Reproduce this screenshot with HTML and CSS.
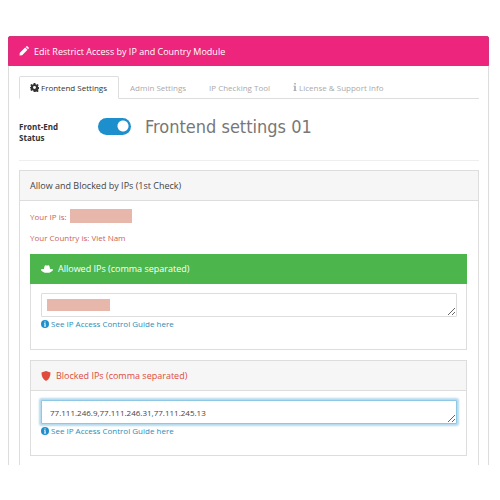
FILE: index.html
```html
<!DOCTYPE html>
<html lang="en">
<head>
<meta charset="UTF-8">
<meta name="viewport" content="width=device-width, initial-scale=1.0">
<title>Edit Restrict Access by IP and Country Module</title>
<link rel="stylesheet" href="styles.css">
</head>
<body>

<main class="module">
    <h1 class="module-heading">
        <svg class="icon icon-pencil" viewBox="0 0 12 12"><path d="M1 8.2 7.4 1.8l2.8 2.8L3.8 11 .6 11.4zM8.1 1.1 8.9.4q.6-.5 1.2 0l1.5 1.5q.5.6 0 1.2l-.7.8z"/></svg>
        Edit Restrict Access by IP and Country Module
    </h1>
    <div class="module-body">
        <nav class="tabs">
            <a href="#frontend" class="tab active"><svg class="icon icon-gear" viewBox="0 0 16 16"><path fill-rule="evenodd" d="M6.5 0h3l.4 2.2 1.5.7 1.9-1.3 2.1 2.1-1.3 1.9.6 1.4 2.3.5v3l-2.3.4-.6 1.5 1.3 1.9-2.1 2.1-1.9-1.3-1.5.6L9.5 16h-3l-.4-2.3-1.5-.6-1.9 1.3-2.1-2.1 1.3-1.9-.6-1.5L0 10.5v-3L1.3 7l.6-1.4L.6 3.7l2.1-2.1 1.9 1.3 1.5-.7zM8 5.4a2.6 2.6 0 1 0 0 5.2 2.6 2.6 0 0 0 0-5.2z"/></svg> Frontend Settings</a>
            <a href="#admin" class="tab">Admin Settings</a>
            <a href="#checking" class="tab">IP Checking Tool</a>
            <a href="#license" class="tab"><svg class="icon icon-i" viewBox="0 0 4 10"><path d="M1 0h2v2H1zM0 3.5h3V9h1v1H0V9h1V4.5H0z"/></svg> License &amp; Support Info</a>
        </nav>

        <div class="status-row">
            <label class="status-label" for="status">Front-End Status</label>
            <input type="checkbox" class="switch" id="status" checked>
            <span class="status-note">Frontend settings 01</span>
        </div>

        <section class="panel panel-main">
            <h2 class="panel-heading">Allow and Blocked by IPs (1st Check)</h2>
            <div class="panel-body">
                <p class="info">Your IP is: <span class="redacted redacted-ip"></span></p>
                <p class="info">Your Country is: Viet Nam</p>

                <section class="panel panel-success">
                    <h3 class="panel-heading">
                        <svg class="icon icon-hat" viewBox="0 0 14 9"><path d="M3.4 4.6C3.7 2 4.3 0 5.3 0 6 0 6.4.5 7 .5S8 0 8.7 0c1 0 1.6 2 1.9 4.6C13 4.2 14 4.4 14 5c0 2-3.5 4-7 4S0 7 0 5c0-.6 1-.8 3.4-.4z"/></svg>
                        <label for="allowed">Allowed IPs (comma separated)</label>
                    </h3>
                    <div class="panel-body">
                        <div class="field">
                            <textarea id="allowed" rows="1"></textarea>
                            <span class="redacted redacted-field"></span>
                        </div>
                        <a href="#guide" class="guide"><svg class="icon icon-info" viewBox="0 0 16 16"><circle cx="8" cy="8" r="8"/><path fill="#fff" d="M6.8 3h2.4v2H6.8zM6 6.5h3.2v5h1V13H6v-1.5h1V8H6z"/></svg> See IP Access Control Guide here</a>
                    </div>
                </section>

                <section class="panel panel-danger">
                    <h3 class="panel-heading">
                        <svg class="icon icon-shield" viewBox="0 0 9 10"><path d="M4.5 0 9 1.6C9 5.5 7.8 8.5 4.5 10 1.2 8.5 0 5.5 0 1.6z"/></svg>
                        <label for="blocked">Blocked IPs (comma separated)</label>
                    </h3>
                    <div class="panel-body">
                        <div class="field">
                            <textarea id="blocked" class="focused" rows="1">77.111.246.9,77.111.246.31,77.111.245.13</textarea>
                        </div>
                        <a href="#guide" class="guide"><svg class="icon icon-info" viewBox="0 0 16 16"><circle cx="8" cy="8" r="8"/><path fill="#fff" d="M6.8 3h2.4v2H6.8zM6 6.5h3.2v5h1V13H6v-1.5h1V8H6z"/></svg> See IP Access Control Guide here</a>
                    </div>
                </section>
            </div>
        </section>
    </div>
</main>

</body>
</html>
```
FILE: styles.css
```css
* {
    box-sizing: border-box;
}
body {
    margin: 0;
    padding: 36px 11px 34px 8px;
    background: #fff;
    color: #444;
    font-family: "Open Sans", sans-serif;
    font-size: 8px;
    line-height: 11px;
}
a {
    text-decoration: none;
}
.icon {
    display: inline-block;
    flex: none;
    fill: currentColor;
}
.module {
    border: 1px solid #ddd;
    border-top: 0;
    border-bottom: 0;
    border-radius: 2px 2px 0 0;
}
.module-heading {
    display: flex;
    align-items: center;
    gap: 5px;
    height: 30px;
    margin: 0 -1px;
    padding: 0 10px;
    border-radius: 2px 2px 0 0;
    border: 1px solid #d6317a;
    background: #ee257c;
    color: #fff;
    font-size: 9px;
    font-weight: 400;
}
.icon-pencil {
    width: 10px;
    height: 10px;
}
.module-body {
    padding: 10px 9px 0 10px;
}
.tabs {
    display: flex;
    border-bottom: 1px solid #ddd;
}
.tab {
    display: flex;
    align-items: center;
    gap: 2px;
    height: 23px;
    margin-bottom: -1px;
    padding: 0 11px 1px 10px;
    border: 1px solid transparent;
    color: #aaa;
}
.tab.active {
    border-color: #ddd;
    border-bottom-color: #fff;
    border-radius: 2px 2px 0 0;
    background: #fff;
    color: #333;
}
.icon-gear {
    width: 9px;
    height: 9px;
}
.icon-i {
    width: 4px;
    height: 8px;
}
.status-row {
    display: flex;
    align-items: flex-start;
    height: 62px;
    padding-top: 19px;
    border-bottom: 1px solid #eee;
}
.status-label {
    width: 48px;
    margin-right: 31px;
    padding-top: 3px;
    color: #333;
    font-weight: 700;
}
.switch {
    appearance: none;
    width: 33px;
    height: 17px;
    margin: 0 14px 0 0;
    border-radius: 9px;
    background: radial-gradient(circle at 25px 8px, #fff 5px, #1e8fcd 6px);
}
.status-note {
    color: #777;
    font-family: "DejaVu Sans Condensed", "Noto Sans", sans-serif;
    font-size: 18px;
    line-height: 18px;
}
.panel {
    border: 1px solid #ddd;
}
.panel-main {
    margin-top: 9px;
    border-bottom: 0;
}
.panel-heading {
    display: flex;
    align-items: center;
    gap: 5px;
    height: 30px;
    margin: 0;
    padding: 0 10px;
    border-bottom: 1px solid #ddd;
    background: #f6f6f6;
    font-size: 9px;
    font-weight: 400;
}
.panel-body {
    padding: 9px 10px;
}
.panel-main > .panel-body {
    padding: 8px 11px 9px 10px;
}
.info {
    display: flex;
    align-items: center;
    gap: 3px;
    height: 14px;
    margin: 0 0 7px;
    color: #cd5f57;
}
.redacted {
    background: #e7b7ac;
}
.redacted-ip {
    width: 62px;
    height: 14px;
}
.redacted-field {
    position: absolute;
    top: 6px;
    left: 6px;
    width: 63px;
    height: 12px;
}
.panel .panel {
    height: 96px;
    margin-top: 10px;
}
.panel .panel .panel-body {
    padding-right: 9px;
}
.panel-success .panel-heading {
    margin: -1px -1px 0;
    padding: 0 11px;
    border-color: #4cb64c;
    background: #4cb64c;
    color: #fff;
}
.panel-danger .panel-heading {
    color: #e04b3c;
}
.icon-hat {
    width: 12px;
    height: 8px;
}
.icon-shield {
    width: 10px;
    height: 10px;
}
.field {
    position: relative;
}
textarea {
    display: block;
    width: 100%;
    height: 24px;
    padding: 6px 8px;
    border: 1px solid #ddd;
    border-radius: 1px;
    outline: none;
    background: #fff;
    color: #444;
    font: inherit;
    overflow: hidden;
    resize: vertical;
}
textarea.focused {
    border-color: #8fc8e4;
    box-shadow: 0 0 2px 2px #b5daec;
}
.guide {
    display: flex;
    align-items: center;
    gap: 2px;
    height: 13px;
    color: #2b8db8;
}
.icon-info {
    width: 8px;
    height: 8px;
    color: #1e8fcd;
}
```
